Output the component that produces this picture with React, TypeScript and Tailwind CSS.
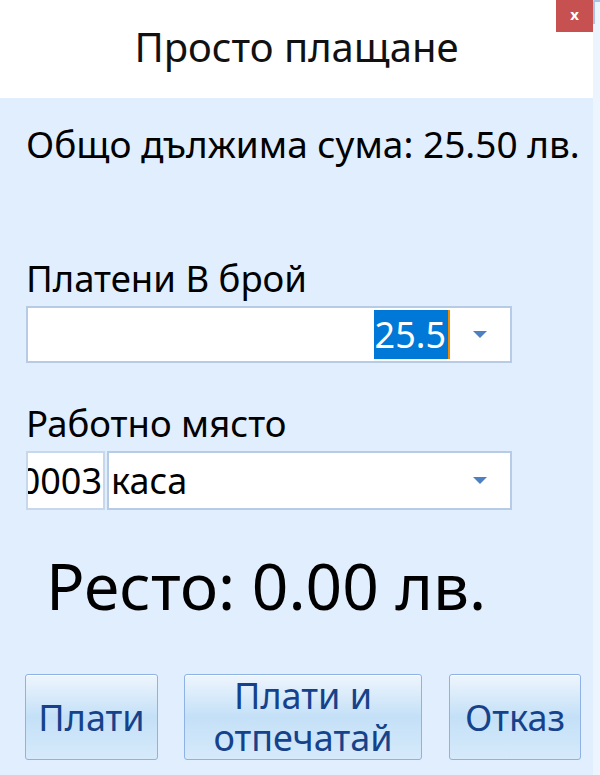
import React from 'react';

const font = { fontFamily: '"Noto Sans", "Open Sans", sans-serif' };

const Arrow: React.FC = () => (
  <svg width="16" height="9" viewBox="0 0 16 9" className="shrink-0">
    <path d="M1 1 L15 1 L8 8 Z" fill="#4d80c0" />
  </svg>
);

const Btn: React.FC<{ className: string; children: React.ReactNode }> = ({ className, children }) => (
  <button
    className={`shrink-0 h-[86px] rounded-[3px] border border-[#8db2e3] bg-gradient-to-b from-[#eef5fd] via-[#c4e0f7] to-[#d6eafb] text-[#15428b] text-[36px] leading-[43px] shadow-[inset_0_1px_0_#ffffff] ${className}`}
  >
    {children}
  </button>
);

const App: React.FC = () => {
  return (
    <div className="flex w-[600px] h-[775px] overflow-hidden text-black" style={font}>
      <div className="flex flex-col w-[593px] bg-[#e1eefd]">
        {/* header */}
        <div className="relative h-[98px] bg-white flex items-center justify-center">
          <h1 className="text-[40px] font-normal text-[#111] pb-1">Просто плащане</h1>
          <div className="absolute right-0 top-0 w-[37px] h-[32px] bg-[#c75050] flex items-center justify-center text-white text-[15px] font-bold leading-none pb-1">
            x
          </div>
        </div>

        <div className="flex flex-col px-[26px]">
          <p className="mt-[26px] text-[37px] leading-[40px] whitespace-nowrap">Общо дължима сума: 25.50 лв.</p>

          <p className="mt-[94px] text-[36.5px] leading-[40px]">Платени В брой</p>
          <div className="mt-[8px] flex items-center w-[486px] h-[57px] bg-white border-2 border-[#b7cbe6]">
            <div className="flex-1 flex justify-end h-full py-[2px]">
              <span className="relative flex items-center bg-[#0078d7] text-white text-[36px] pl-[1px] pr-[2px] border-r-2 border-[#f28a00]">
                25.5
              </span>
            </div>
            <div className="w-[60px] flex justify-center">
              <Arrow />
            </div>
          </div>

          <p className="mt-[40px] text-[36.5px] leading-[40px]">Работно място</p>
          <div className="mt-[8px] flex h-[59px] w-[486px]">
            <div className="w-[79px] bg-white border-2 border-[#c7d7ec] overflow-hidden flex items-center justify-end text-[36px] pr-[1px]">
              0003
            </div>
            <div className="ml-[2px] flex-1 bg-white border-2 border-[#b7cbe6] flex items-center">
              <span className="flex-1 text-[36px] pl-[2px]">каса</span>
              <div className="w-[60px] flex justify-center">
                <Arrow />
              </div>
            </div>
          </div>

          <p className="mt-[40px] ml-[20px] text-[64px] leading-[72px] whitespace-nowrap">Ресто: 0.00 лв.</p>

          <div className="mt-[52px] flex -ml-[1px]">
            <Btn className="w-[133px]">Плати</Btn>
            <Btn className="ml-[26px] w-[238px] flex flex-col items-center justify-center text-[35px]">
              <span className="block leading-[42px]">Плати и</span>
              <span className="block leading-[42px]">отпечатай</span>
            </Btn>
            <Btn className="ml-[27px] w-[132px]">Отказ</Btn>
          </div>
        </div>
      </div>
      <div className="flex-1 bg-[#ecf4fd] flex flex-col">
        <div className="h-[24px] border-l-2 border-t-2 border-[#a9c4e6] rounded-tl-[2px]" />
      </div>
    </div>
  );
};

export default App;
